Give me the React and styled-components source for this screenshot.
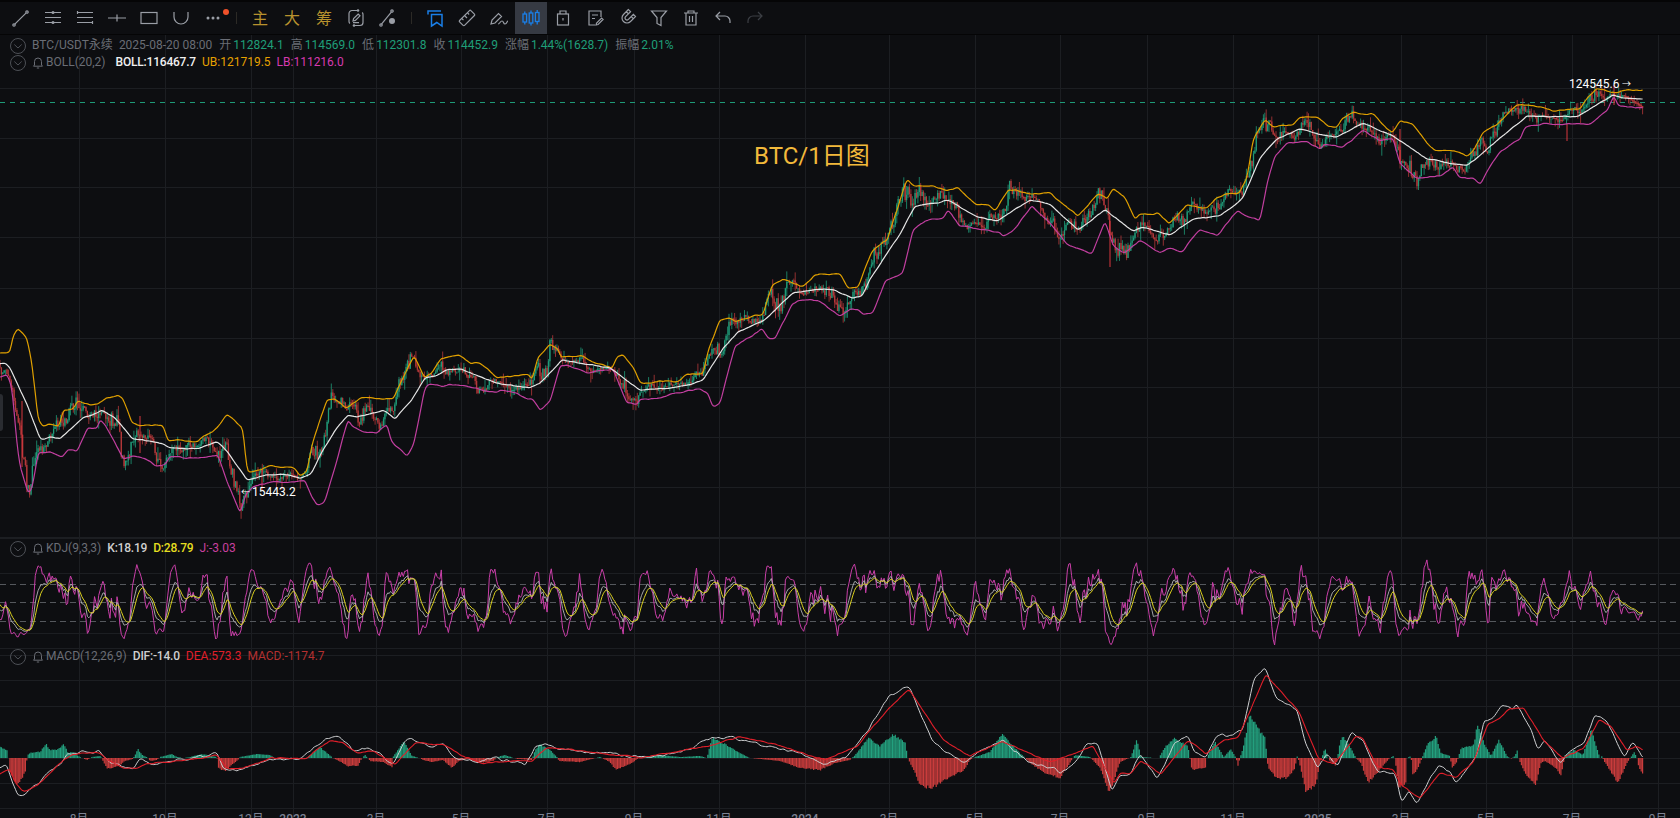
import React from 'react';
import styled, { createGlobalStyle } from 'styled-components';

const FONT = `Roboto, 'Noto Sans CJK SC', sans-serif`;
const DAY = 1.41;
const LAST_X = 1643;

const GRID_X = [79, 165, 251, 293, 376, 461, 547, 634, 719, 805, 889, 975, 1060, 1147, 1233, 1318, 1401, 1486, 1572, 1658];
const TIME_LABELS = ['8月', '10月', '12月', '2023', '3月', '5月', '7月', '9月', '11月', '2024', '3月', '5月', '7月', '9月', '11月', '2025', '3月', '5月', '7月', '9月'];

const pairs = (a) => a.reduce((out, v, i) => (i % 2 ? out : [...out, [v, a[i + 1]]]), []);

const UPPER = pairs([0,352, 10,351, 13,335, 18,327, 27,338, 32,363, 38,417, 43,426, 48,423, 59,425, 63,410, 73,408, 78,400, 90,404, 98,403, 107,397, 118,394, 123,398, 132,422, 138,424, 163,424, 168,440, 177,439, 198,441, 200,438, 217,427, 227,414, 233,418, 243,428, 247,470, 250,472, 270,465, 295,467, 300,475, 307,470, 312,443, 327,399, 334,398, 346,407, 361,397, 393,398, 405,372, 414,355, 425,377, 432,372, 441,357, 459,354, 471,363, 480,362, 498,377, 529,374, 532,379, 538,357, 550,343, 558,348, 561,356, 582,355, 597,363, 612,367, 617,356, 623,354, 633,367, 640,382, 650,382, 660,380, 677,381, 687,373, 703,373, 708,350, 720,319, 730,317, 735,321, 763,313, 772,285, 783,278, 803,286, 815,274, 840,273, 848,287, 858,286, 872,250, 883,241, 887,240, 907,178, 913,185, 932,185, 947,189, 958,187, 975,203, 988,203, 995,210, 1008,189, 1017,189, 1027,193, 1050,192, 1078,215, 1098,193, 1107,198, 1113,188, 1125,197, 1135,218, 1140,212, 1153,214, 1158,212, 1169,223, 1187,204, 1207,207, 1217,196, 1228,193, 1239,192, 1247,177, 1253,138, 1265,118, 1273,126, 1293,123, 1300,116, 1317,116, 1328,125, 1337,126, 1342,118, 1353,111, 1367,114, 1373,113, 1392,132, 1400,120, 1413,123, 1427,143, 1435,150, 1453,149, 1467,155, 1473,150, 1483,131, 1497,123, 1517,104, 1543,106, 1553,110, 1580,108, 1587,97, 1597,87, 1613,92, 1630,89, 1643,89]);

const MIDDLE = pairs([0,363, 5,362, 10,367, 17,382, 27,403, 40,438, 43,439, 50,436, 60,438, 72,427, 83,417, 93,414, 102,409, 115,417, 133,438, 143,439, 163,443, 170,447, 197,448, 217,441, 227,450, 247,479, 267,474, 283,473, 300,477, 311,473, 321,453, 336,428, 348,414, 357,416, 384,409, 395,418, 411,400, 425,377, 436,375, 446,369, 461,368, 496,382, 530,387, 540,382, 562,359, 610,367, 640,389, 670,387, 693,383, 703,379, 723,347, 738,331, 765,319, 793,292, 820,288, 833,289, 853,297, 862,295, 870,278, 900,233, 915,205, 937,202, 948,199, 977,216, 997,220, 1030,199, 1050,203, 1078,229, 1105,209, 1133,230, 1142,226, 1170,234, 1193,218, 1220,215, 1243,197, 1260,157, 1277,138, 1300,128, 1323,134, 1337,136, 1363,122, 1393,135, 1427,158, 1467,165, 1493,143, 1527,115, 1577,116, 1613,94, 1623,97, 1643,98]);

const LOWER = pairs([0,376, 7,375, 12,387, 17,443, 20,465, 28,492, 32,488, 38,453, 50,451, 62,457, 68,449, 77,450, 88,427, 97,427, 100,418, 105,423, 113,438, 123,458, 132,455, 147,458, 155,465, 165,463, 170,456, 197,457, 218,454, 227,480, 240,512, 246,493, 252,486, 271,481, 293,481, 305,480, 312,497, 317,504, 325,500, 332,477, 348,418, 352,425, 364,431, 377,432, 387,423, 391,440, 407,455, 414,443, 425,387, 429,383, 443,385, 450,383, 464,385, 496,392, 500,389, 513,391, 527,398, 532,397, 540,409, 550,400, 560,365, 567,364, 588,372, 613,368, 627,402, 637,403, 640,398, 657,398, 677,392, 700,388, 708,393, 713,406, 720,402, 735,345, 762,328, 769,338, 775,338, 792,303, 798,300, 817,299, 840,315, 850,308, 858,308, 863,313, 873,312, 885,280, 903,272, 913,228, 927,219, 943,217, 948,208, 960,225, 975,227, 1000,232, 1003,236, 1013,230, 1032,205, 1053,225, 1067,243, 1092,253, 1105,220, 1113,245, 1125,252, 1140,239, 1160,252, 1170,247, 1182,251, 1200,228, 1217,235, 1233,215, 1238,210, 1247,215, 1260,220, 1267,183, 1275,155, 1287,142, 1307,140, 1320,148, 1325,143, 1343,146, 1363,130, 1380,140, 1393,137, 1400,163, 1417,177, 1440,175, 1453,167, 1460,177, 1473,177, 1480,183, 1500,150, 1520,138, 1525,126, 1543,123, 1590,123, 1607,110, 1614,95, 1618,105, 1643,107]);

const DIF = pairs([0,767, 7,764, 12,780, 18,795, 23,795, 37,783, 50,770, 62,760, 67,754, 80,752, 93,751, 100,751, 110,762, 127,767, 133,767, 140,758, 153,764, 170,759, 187,759, 217,752, 223,767, 237,769, 257,762, 270,758, 302,757, 310,750, 320,742, 328,737, 340,738, 353,750, 367,747, 380,752, 393,763, 404,741, 412,739, 434,747, 443,743, 454,757, 479,762, 493,757, 525,763, 536,745, 546,743, 560,748, 600,752, 640,756, 680,752, 707,739, 729,736, 766,745, 793,750, 825,763, 846,755, 868,729, 889,696, 909,686, 932,739, 964,763, 980,750, 1002,739, 1029,761, 1061,771, 1071,766, 1085,745, 1098,742, 1112,790, 1120,773, 1131,773, 1140,752, 1157,777, 1175,742, 1188,735, 1193,748, 1206,757, 1216,735, 1227,735, 1233,732, 1243,728, 1254,678, 1265,667, 1277,698, 1297,708, 1306,743, 1318,766, 1327,753, 1338,765, 1352,729, 1363,740, 1377,770, 1395,772, 1402,802, 1409,788, 1416,803, 1438,765, 1450,771, 1456,781, 1477,755, 1484,720, 1491,717, 1502,704, 1513,708, 1516,703, 1531,730, 1538,747, 1545,740, 1561,763, 1570,750, 1584,743, 1595,713, 1607,720, 1624,755, 1633,740, 1643,757]);

const DEA = pairs([0,773, 10,768, 15,782, 23,791, 37,785, 50,773, 63,760, 72,754, 83,752, 100,752, 107,759, 123,767, 137,767, 147,763, 167,761, 200,757, 217,754, 227,768, 240,768, 260,762, 270,757, 307,757, 317,748, 330,740, 343,742, 357,752, 373,750, 387,758, 395,764, 416,741, 429,743, 443,743, 461,754, 482,762, 518,760, 532,760, 546,746, 560,748, 600,752, 640,757, 707,745, 739,736, 771,742, 825,759, 857,745, 889,707, 909,688, 943,739, 970,755, 1002,741, 1050,761, 1093,745, 1114,782, 1120,772, 1131,772, 1141,759, 1161,773, 1188,739, 1206,753, 1224,739, 1238,737, 1266,674, 1299,710, 1318,757, 1334,763, 1356,735, 1363,737, 1377,766, 1393,768, 1402,785, 1420,798, 1440,772, 1456,777, 1474,760, 1488,723, 1499,718, 1509,708, 1524,707, 1543,739, 1563,757, 1584,747, 1599,719, 1611,725, 1627,749, 1636,745, 1643,749]);

const HIST = pairs([0,11, 7,8, 8.5,0, 9,-12, 13,-20, 18,-27, 22,-20, 26,-12, 27,0, 27.5,3, 30,5, 35,6, 40,6, 46,14, 50,8, 57,8, 64,14, 68,5, 73,6, 80,1, 87,-2, 92,1, 100,2, 102,0, 103,-3, 107,-10, 113,-10, 120,-7, 125,-3, 133,-1, 135,3, 138,9, 142,3, 147,1, 150,-3, 157,-2, 160,1, 172,4, 177,1, 183,0, 190,1, 202,4, 217,1, 218,-10, 225,-13, 233,-6, 239,-1, 240,1, 257,4, 270,3, 275,0, 277,-1, 293,-1, 307,-1, 308,1, 320,11, 333,0, 337,-2, 348,-8, 358,-8, 362,0, 363,1, 365,3, 368,0, 370,-3, 383,-4, 392,-9, 393,1, 404,17, 412,2, 420,0, 423,-2, 432,-4, 443,-2, 452,-10, 459,-3, 468,-1, 479,-5, 493,-3, 498,1, 504,3, 511,1, 518,-1, 532,-2, 534,5, 539,14, 550,8, 557,1, 559,-3, 580,-4, 600,1, 610,-4, 616,-12, 632,-5, 640,1, 660,3, 680,1, 700,2, 707,0, 712,20, 725,14, 740,5, 750,0, 780,-3, 800,-10, 820,-12, 835,-5, 850,-2, 857,5, 868,20, 880,12, 893,24, 905,16, 908,0, 910,-5, 921,-28, 932,-30, 945,-22, 964,-12, 970,-2, 975,1, 990,6, 1002,24, 1015,10, 1025,0, 1030,-5, 1045,-15, 1060,-20, 1070,-5, 1075,3, 1090,1, 1100,-10, 1109,-35, 1115,-20, 1120,-4, 1129,0, 1131,1, 1137,19, 1141,1, 1159,0, 1165,11, 1175,20, 1188,12, 1190,0, 1190.5,-8, 1193,-12, 1206,-10, 1207,0, 1209,5, 1215,16, 1224,1, 1231,9, 1236,0, 1238,-8, 1240,0, 1243,10, 1250,44, 1261,25, 1265,22, 1267,0, 1268,-10, 1277,-20, 1288,-20, 1295,-10, 1297,2, 1299,-3, 1306,-35, 1316,-27, 1320,-5, 1325,10, 1329,-2, 1336,-8, 1340,15, 1343,22, 1352,8, 1356,0, 1361,-5, 1368,-25, 1377,-15, 1388,-2, 1393,2, 1395,-1, 1399,-30, 1406,-25, 1407,0, 1411,2, 1413,-18, 1418,-10, 1422,0, 1427,13, 1436,22, 1441,5, 1450,2, 1452,-10, 1457,-4, 1461,10, 1474,13, 1477,35, 1484,15, 1491,2, 1499,18, 1507,2, 1511,-1, 1515,2, 1517,8, 1519,-2, 1525,-15, 1536,-27, 1541,-5, 1545,-3, 1556,-10, 1561,-18, 1565,3, 1574,8, 1583,3, 1588,18, 1591,30, 1600,0, 1602,2, 1604,-3, 1618,-25, 1627,-5, 1631,1, 1634,6, 1637,0, 1639,-10, 1643,-15]);

// long single wicks that stick out of the band
const SPIKES = [[140, 415, 452], [1110, 220, 266], [22, 400, 466], [262, 468, 490], [1400, 128, 163], [1567, 123, 140], [1614, 84, 104]];

const rng = (seed) => () => {
  seed = (seed + 0x6d2b79f5) | 0;
  let t = Math.imul(seed ^ (seed >>> 15), 1 | seed);
  t = (t + Math.imul(t ^ (t >>> 7), 61 | t)) ^ t;
  return ((t ^ (t >>> 14)) >>> 0) / 4294967296;
};

const at = (keys, x) => {
  let i = 1;
  while (i < keys.length - 1 && keys[i][0] < x) i++;
  const [x0, y0] = keys[i - 1];
  const [x1, y1] = keys[i];
  return y0 + ((y1 - y0) * Math.min(1, Math.max(0, (x - x0) / (x1 - x0))));
};

const DAYS = Array.from({ length: Math.floor(LAST_X / DAY) + 1 }, (_, i) => i * DAY);

const line = (keys, wobble = 0, seed = 1) => {
  const rand = rng(seed);
  let drift = 0;
  const ys = DAYS.map((x) => {
    drift = drift * 0.7 + (rand() - 0.5) * wobble;
    return at(keys, x) + drift;
  });
  return ys.map((y, i) => {
    const a = ys[Math.max(0, i - 1)];
    const b = ys[Math.min(ys.length - 1, i + 1)];
    return (a + 2 * y + b) / 4;
  });
};

const toPath = (ys) => 'M' + ys.map((y, i) => `${DAYS[i].toFixed(1)} ${y.toFixed(1)}`).join('L');

function buildCandles() {
  const rand = rng(77);
  const out = { upBody: '', downBody: '', upWick: '', downWick: '', closes: [], highs: [], lows: [] };
  let prev = at(MIDDLE, 0);
  let ar1 = 0;
  let ar2 = 0;
  DAYS.forEach((x) => {
    const u = at(UPPER, x);
    const m = at(MIDDLE, x);
    const l = at(LOWER, x);
    const slope = (at(MIDDLE, x - 12) - at(MIDDLE, x + 12)) / 24;
    const trend = Math.max(-0.7, Math.min(0.7, slope * 1.5));
    // quasi periodic swing, period around 28px
    const ar = 1.72 * ar1 - 0.82 * ar2 + (rand() - 0.5) * 0.3;
    ar2 = ar1;
    ar1 = ar;
    let s = trend + ar * 0.85;
    if (x > 1622) s = 0.5 - ((x - 1622) / 21) * 1.4;
    s = Math.max(-1.1, Math.min(1.1, s));
    const noise = x > 1622 ? 0 : (rand() - 0.5) * Math.min(16, (l - u) * 0.32);
    const close = (s > 0 ? m + s * (u - m) : m - s * (l - m)) + noise;
    const open = prev;
    const high = Math.min(open, close) - rand() * rand() * 12;
    const low = Math.max(open, close) + rand() * rand() * 12;
    const up = close < open;
    const body = `M${x.toFixed(1)} ${open.toFixed(1)}V${(close + (Math.abs(close - open) < 1 ? 1 : 0)).toFixed(1)}`;
    const wick = `M${x.toFixed(1)} ${high.toFixed(1)}V${low.toFixed(1)}`;
    if (up) {
      out.upBody += body;
      out.upWick += wick;
    } else {
      out.downBody += body;
      out.downWick += wick;
    }
    out.closes.push(-close);
    out.highs.push(-high);
    out.lows.push(-low);
    prev = close;
  });
  return out;
}

function buildKdj(c) {
  let k = 50;
  let d = 50;
  const K = [];
  const D = [];
  const J = [];
  const toY = (v) => 601 - (v - 50) * 0.617;
  c.closes.forEach((close, i) => {
    const from = Math.max(0, i - 8);
    const hh = Math.max(...c.highs.slice(from, i + 1));
    const ll = Math.min(...c.lows.slice(from, i + 1));
    const rsv = ((close - ll) / (hh - ll || 1)) * 100;
    k = (2 * k + rsv) / 3;
    d = (2 * d + k) / 3;
    K.push(toY(k));
    D.push(toY(d));
    J.push(toY(3 * k - 2 * d));
  });
  return { K: toPath(K), D: toPath(D), J: toPath(J) };
}

function buildHist() {
  const rand = rng(5);
  let up = '';
  let down = '';
  DAYS.forEach((x) => {
    const h = at(HIST, x);
    const v = h * (0.94 + rand() * 0.12);
    if (Math.abs(v) < 0.4) return;
    const seg = `M${x.toFixed(1)} 757V${(757 - v).toFixed(1)}`;
    if (v > 0) up += seg;
    else down += seg;
  });
  return { up, down };
}

const CANDLES = buildCandles();
const KDJ = buildKdj(CANDLES);
const BARS = buildHist();
const BANDS = {
  u: toPath(line(UPPER, 1, 11)),
  m: toPath(line(MIDDLE, 0.6, 12)),
  l: toPath(line(LOWER, 1, 13)),
};
const MACD = { dif: toPath(line(DIF, 2.4, 21)), dea: toPath(line(DEA, 1, 22)) };
const SPIKE_PATH = SPIKES.map(([x, a, b]) => `M${x} ${a}V${b}`).join('');

const GlobalStyle = createGlobalStyle`
  html, body {
    margin: 0;
    height: 100%;
    background: #0d0e11;
    font-family: ${FONT};
  }
  #root {
    height: 100%;
  }
`;

const Page = styled.div`
  display: flex;
  flex-direction: column;
  height: 100vh;
  overflow: hidden;
  background: #0d0e11;
`;

const Toolbar = styled.div`
  display: flex;
  align-items: center;
  flex: none;
  box-sizing: border-box;
  height: 35px;
  padding-left: 5px;
  border-top: 2px solid #050506;
  border-bottom: 1px solid #050506;
`;

const ToolButton = styled.div`
  position: relative;
  display: flex;
  align-items: center;
  justify-content: center;
  width: 32px;
  height: 32px;
  color: ${(p) => p.$color || '#9a9ea6'};
  background: ${(p) => (p.$active ? '#363a43' : 'transparent')};
`;

const ToolText = styled.span`
  padding-bottom: 3px;
  font: 400 16px/20px 'Noto Sans CJK SC', sans-serif;
  color: #b8922e;
`;

const ToolSep = styled.span`
  flex: none;
  width: 1px;
  height: 12px;
  margin: 0 7px;
  background: #2c2a26;
`;

const Badge = styled.span`
  position: absolute;
  left: 26px;
  top: 7px;
  width: 6px;
  height: 6px;
  border-radius: 50%;
  background: #f0512a;
`;

const IconSvg = styled.svg.attrs({ viewBox: '0 0 20 20' })`
  width: 20px;
  height: 20px;
  fill: none;
  stroke: currentColor;
  stroke-width: 1.2;
`;

const Dot = styled.circle`
  fill: currentColor;
  stroke: none;
`;

const Pane = styled.section`
  position: relative;
  flex: none;
  height: ${(p) => p.$h}px;
  overflow: hidden;
`;

const ChartSvg = styled.svg`
  display: block;
  width: 100%;
  height: 100%;
`;

const GridLines = styled.path`
  stroke: #1c1e22;
  stroke-width: 1;
  fill: none;
`;

const PriceLine = styled.path`
  stroke: #1f9a78;
  stroke-width: 1;
  stroke-dasharray: 5 5;
  fill: none;
`;

const LevelLines = styled.path`
  stroke: #55585d;
  stroke-width: 1;
  stroke-dasharray: 6 4;
  fill: none;
`;

const Stroke = styled.path`
  stroke: ${(p) => p.$color};
  stroke-width: ${(p) => p.$w || 1};
  stroke-linejoin: round;
  fill: none;
`;

const AxisLabel = styled.text`
  font: ${(p) => (p.$year ? 500 : 400)} 12px ${FONT};
  fill: #7d8394;
  text-anchor: middle;
`;

const PriceMark = styled.text`
  font: 400 ${(p) => p.$size || 12}px ${FONT};
  fill: #ffffff;
`;

const Legend = styled.div`
  position: absolute;
  left: 10px;
  top: ${(p) => p.$top}px;
`;

const LegendRow = styled.div`
  display: flex;
  align-items: center;
  height: 17px;
  font-size: 12px;
  line-height: 17px;
  white-space: nowrap;
  color: #6a6d75;
`;

const Head = styled.div`
  display: flex;
  align-items: center;
  gap: 6px;
  margin-right: ${(p) => p.$right}px;
`;

const Items = styled.div`
  display: flex;
  align-items: center;
  gap: ${(p) => p.$gap}px;
`;

const Pair = styled.span`
  display: flex;
  align-items: center;
  gap: 2px;
`;

const Value = styled.span`
  color: ${(p) => p.$color || '#1f9e78'};
  font-weight: ${(p) => p.$weight || 400};
  letter-spacing: ${(p) => (p.$weight ? '-0.2px' : '0')};
`;

const ChevronSvg = styled.svg.attrs({ viewBox: '0 0 16 16' })`
  flex: none;
  width: 16px;
  height: 16px;
  fill: none;
  stroke: #4d5056;
  stroke-width: 1;
`;

const BellSvg = styled.svg.attrs({ viewBox: '0 0 12 13' })`
  flex: none;
  width: 12px;
  height: 13px;
  fill: none;
  stroke: #6a6d75;
  stroke-width: 1;
`;

const Note = styled.span`
  position: absolute;
  left: 754px;
  top: 104px;
  font: 400 24px/34px ${FONT};
  color: #f2b93b;
`;

const SideHandle = styled.span`
  position: absolute;
  left: 0;
  top: 359px;
  width: 3px;
  height: 37px;
  border-radius: 0 3px 3px 0;
  background: #2a2c31;
`;

const icons = {
  line: (
    <>
      <path d="M3.8 16.2 15.2 4.8" />
      <circle cx="3" cy="17" r="1.2" />
      <circle cx="16" cy="4" r="1.2" />
    </>
  ),
  hlines: (
    <>
      <path d="M2 4.5h16M2 9.5h16M2 14.5h16" />
      <Dot cx="10" cy="4.5" r="1.5" />
      <Dot cx="10" cy="14.5" r="1.5" />
    </>
  ),
  channel: <path d="M2 4.5h16M2 9.5h16M2 14.5h16M2.5 3v3M17.5 13v3" />,
  ray: <path d="M1 10h18M10 6.5v7" />,
  rect: <rect x="2" y="4.5" width="16" height="11" />,
  arc: <path d="M3 4v5a7 7 0 0 0 14 0V4" />,
  more: (
    <>
      <Dot cx="5" cy="10" r="1.5" />
      <Dot cx="10" cy="10" r="1.5" />
      <Dot cx="15" cy="10" r="1.5" />
    </>
  ),
  sync: (
    <>
      <path d="M11 2.5H6a3 3 0 0 0-3 3v8a3 3 0 0 0 .8 2M9 17.5h5a3 3 0 0 0 3-3v-8a3 3 0 0 0-.8-2" />
      <Dot cx="12" cy="2.5" r="1.3" />
      <Dot cx="8" cy="17.5" r="1.3" />
      <path d="m7 13 .6-2.4 4.6-4.6 1.8 1.8-4.6 4.6zM7 14.7h6" />
    </>
  ),
  linePin: (
    <>
      <path d="M3.5 16.2 13.5 3.8" />
      <circle cx="3" cy="17" r="1.2" />
      <circle cx="14" cy="3" r="1.2" />
      <Dot cx="14" cy="13" r="3" />
    </>
  ),
  bookmark: (
    <>
      <path d="M3 6.5V3h13" strokeWidth="1.5" />
      <path d="M6.5 6.5H17v11.5l-5.2-3.5-5.3 3.5z" strokeWidth="1.5" />
    </>
  ),
  ruler: (
    <g transform="rotate(-45 10 10)">
      <rect x="2" y="6.5" width="16" height="7" rx="1" />
      <path d="M6 6.5V9M10 6.5V10M14 6.5V9" />
    </g>
  ),
  pen: <path d="m2 16 1-4 6.5-6.5 3 3L6 15zM9 16c2 0 2-3 4-3s1 3 3 3 2-3 3-3" />,
  candles: (
    <g strokeWidth="1.3">
      <rect x="2" y="6" width="3.6" height="8" />
      <path d="M3.8 3.5V6M3.8 14v2.5" />
      <rect x="8.2" y="5" width="3.6" height="10" />
      <path d="M10 2.5V5M10 15v2.5" />
      <rect x="14.4" y="4.5" width="3.6" height="9" />
      <path d="M16.2 2v2.5M16.2 13.5v3" />
    </g>
  ),
  tab: (
    <>
      <rect x="4.5" y="6" width="11" height="11" />
      <path d="M7 6V3h6v3M10 10v2.5" />
    </>
  ),
  note: (
    <>
      <path d="M16 9V3H4v14h6M7 7h6M7 10.5h3" />
      <path d="m11 17 .6-2 5-5 1.5 1.5-5 5z" />
    </>
  ),
  magnet: (
    <g transform="rotate(45 10 10)">
      <path d="M5 3v7a5 5 0 0 0 10 0V3h-3v7a2 2 0 0 1-4 0V3zM5 6h3M12 6h3" />
    </g>
  ),
  funnel: <path d="M2.5 3h15L12 9.5v8l-4-2v-6z" />,
  trash: <path d="M3 5h14M7 5V3h6v2M5 5v12h10V5M8.5 8v6M11.5 8v6" />,
  undo: <path d="M7 4 3 8l4 4M3 8h9a5 5 0 0 1 5 5v2" />,
  redo: <path d="m13 4 4 4-4 4M17 8H8a5 5 0 0 0-5 5v2" />,
};

function Tool({ name, active, color, children }) {
  return (
    <ToolButton $active={active} $color={color}>
      {name && <IconSvg>{icons[name]}</IconSvg>}
      {children}
    </ToolButton>
  );
}

function Chevron() {
  return (
    <ChevronSvg>
      <circle cx="8" cy="8" r="7.5" />
      <path d="m4.3 6.5 3.7 3.5 3.7-3.5" />
    </ChevronSvg>
  );
}

function Bell() {
  return (
    <BellSvg>
      <path d="M2.5 9V5.5a3.5 3.5 0 0 1 7 0V9l1 1.2h-9zM4.8 12h2.4" />
    </BellSvg>
  );
}

function TopBar() {
  return (
    <Toolbar>
      <Tool name="line" />
      <Tool name="hlines" />
      <Tool name="channel" />
      <Tool name="ray" />
      <Tool name="rect" />
      <Tool name="arc" />
      <Tool name="more">
        <Badge />
      </Tool>
      <ToolSep />
      <Tool><ToolText>主</ToolText></Tool>
      <Tool><ToolText>大</ToolText></Tool>
      <Tool><ToolText>筹</ToolText></Tool>
      <Tool name="sync" />
      <Tool name="linePin" />
      <ToolSep />
      <Tool name="bookmark" color="#1a7fe8" />
      <Tool name="ruler" />
      <Tool name="pen" />
      <Tool name="candles" color="#1a7fe8" active />
      <Tool name="tab" />
      <Tool name="note" />
      <Tool name="magnet" />
      <Tool name="funnel" />
      <Tool name="trash" />
      <Tool name="undo" />
      <Tool name="redo" color="#3c3f45" />
    </Toolbar>
  );
}

function Grid({ ys, top, h }) {
  const d = ys.map((y) => `M0 ${y + 0.5}H1680`).join('') + GRID_X.map((x) => `M${x + 0.5} ${top}V${top + h}`).join('');
  return <GridLines d={d} />;
}

const MAIN_YS = [87, 137, 186, 236, 287, 337, 386, 436, 486, 536];
const KDJ_YS = [537, 572, 632];
const MACD_YS = [647, 654, 679, 705, 731, 757, 782, 807];

const QUOTE = [
  ['开', '112824.1'],
  ['高', '114569.0'],
  ['低', '112301.8'],
  ['收', '114452.9'],
  ['涨幅', '1.44%(1628.7)'],
  ['振幅', '2.01%'],
];

function MainPane() {
  return (
    <Pane $h={503}>
      <ChartSvg viewBox="0 34 1680 503">
        <Grid ys={MAIN_YS} top={34} h={503} />
        <PriceLine d="M0 101.5H1680" />
        <Stroke d={CANDLES.upWick} $color="#1f9a78" $w={0.8} />
        <Stroke d={CANDLES.downWick} $color="#b5383a" $w={0.8} />
        <Stroke d={CANDLES.upBody} $color="#1f9a78" $w={1.3} />
        <Stroke d={CANDLES.downBody} $color="#b5383a" $w={1.3} />
        <Stroke d={SPIKE_PATH} $color="#d9363e" $w={1} />
        <Stroke d={BANDS.u} $color="#e0a000" $w={1.2} />
        <Stroke d={BANDS.l} $color="#c23fa0" $w={1.2} />
        <Stroke d={BANDS.m} $color="#e6e6e6" $w={1.2} />
        <PriceMark x="1569" y="87">124545.6</PriceMark>
        <PriceMark x="1622" y="86" $size={9}>→</PriceMark>
        <PriceMark x="241" y="494" $size={9}>←</PriceMark>
        <PriceMark x="252" y="495">15443.2</PriceMark>
      </ChartSvg>
      <Legend $top={2}>
        <LegendRow>
          <Head $right={6}>
            <Chevron />
            BTC/USDT永续
          </Head>
          <Items $gap={7}>
            2025-08-20 08:00
            {QUOTE.map(([label, value]) => (
              <Pair key={label}>
                {label}
                <Value>{value}</Value>
              </Pair>
            ))}
          </Items>
        </LegendRow>
        <LegendRow>
          <Head $right={10}>
            <Chevron />
            <Pair>
              <Bell />
              BOLL(20,2)
            </Pair>
          </Head>
          <Items $gap={6}>
            <Value $color="#f0f0f0" $weight={500}>BOLL:116467.7</Value>
            <Value $color="#e6a100">UB:121719.5</Value>
            <Value $color="#d63ab0">LB:111216.0</Value>
          </Items>
        </LegendRow>
      </Legend>
      <Note>BTC/1日图</Note>
      <SideHandle />
    </Pane>
  );
}

function KdjPane() {
  return (
    <Pane $h={110}>
      <ChartSvg viewBox="0 537 1680 110">
        <Grid ys={KDJ_YS} top={537} h={110} />
        <LevelLines d="M0 583.5H1680M0 601.5H1680M0 620.5H1680" />
        <Stroke d={KDJ.J} $color="#c93fa8" $w={1} />
        <Stroke d={KDJ.K} $color="#b4b5b8" $w={0.9} />
        <Stroke d={KDJ.D} $color="#d9cf1e" $w={1} />
      </ChartSvg>
      <Legend $top={2}>
        <LegendRow>
          <Head $right={6}>
            <Chevron />
            <Pair>
              <Bell />
              KDJ(9,3,3)
            </Pair>
          </Head>
          <Items $gap={6}>
            <Value $color="#cfcfcf" $weight={500}>K:18.19</Value>
            <Value $color="#e6de20" $weight={500}>D:28.79</Value>
            <Value $color="#c9409f">J:-3.03</Value>
          </Items>
        </LegendRow>
      </Legend>
    </Pane>
  );
}

function MacdPane() {
  return (
    <Pane $h={171}>
      <ChartSvg viewBox="0 647 1680 171">
        <Grid ys={MACD_YS} top={647} h={171} />
        <Stroke d={BARS.up} $color="#23a07e" $w={1.2} />
        <Stroke d={BARS.down} $color="#c93c3c" $w={1.2} />
        <Stroke d={MACD.dif} $color="#cfd0d2" $w={1} />
        <Stroke d={MACD.dea} $color="#e01f2a" $w={1.1} />
        {TIME_LABELS.map((label, i) => (
          <AxisLabel key={i} x={GRID_X[i]} y="822" $year={label.length === 4}>
            {label}
          </AxisLabel>
        ))}
      </ChartSvg>
      <Legend $top={0}>
        <LegendRow>
          <Head $right={6}>
            <Chevron />
            <Pair>
              <Bell />
              MACD(12,26,9)
            </Pair>
          </Head>
          <Items $gap={6}>
            <Value $color="#cfcfcf" $weight={500}>DIF:-14.0</Value>
            <Value $color="#e01f2a">DEA:573.3</Value>
            <Value $color="#b43030">MACD:-1174.7</Value>
          </Items>
        </LegendRow>
      </Legend>
    </Pane>
  );
}

export default function App() {
  return (
    <Page>
      <GlobalStyle />
      <TopBar />
      <MainPane />
      <KdjPane />
      <MacdPane />
    </Page>
  );
}
